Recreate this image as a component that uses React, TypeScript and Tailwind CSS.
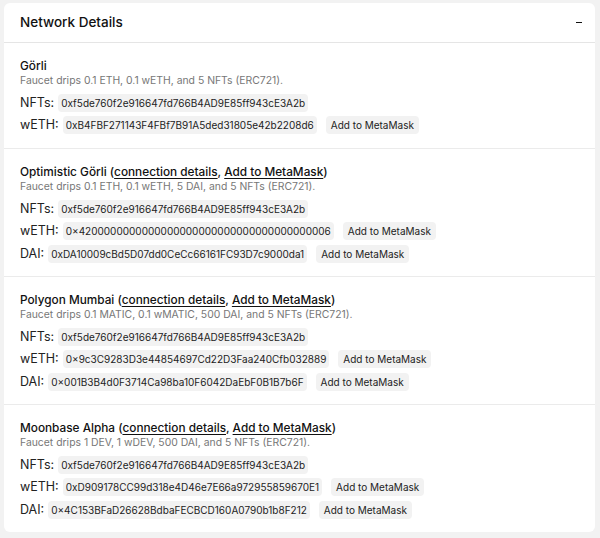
import React from "react";

const NFT = "0xf5de760f2e916647fd766B4AD9E85ff943cE3A2b";

type Row = { label: string; addr: string; add?: boolean; mt: string };
type Net = { name: string; links: boolean; desc: string; rows: Row[]; pb: string };

const nets: Net[] = [
  {
    name: "Görli",
    links: false,
    desc: "Faucet drips 0.1 ETH, 0.1 wETH, and 5 NFTs (ERC721).",
    pb: "pb-[13px]",
    rows: [
      { label: "NFTs:", addr: NFT, mt: "mt-[5px]" },
      { label: "wETH:", addr: "0xB4FBF271143F4FBf7B91A5ded31805e42b2208d6", add: true, mt: "mt-[2px]" },
    ],
  },
  {
    name: "Optimistic Görli",
    links: true,
    desc: "Faucet drips 0.1 ETH, 0.1 wETH, 5 DAI, and 5 NFTs (ERC721).",
    pb: "pb-[12px]",
    rows: [
      { label: "NFTs:", addr: NFT, mt: "mt-[5px]" },
      { label: "wETH:", addr: "0×4200000000000000000000000000000000000006", add: true, mt: "mt-[2px]" },
      { label: "DAI:", addr: "0xDA10009cBd5D07dd0CeCc66161FC93D7c9000da1", add: true, mt: "mt-[3px]" },
    ],
  },
  {
    name: "Polygon Mumbai",
    links: true,
    desc: "Faucet drips 0.1 MATIC, 0.1 wMATIC, 500 DAI, and 5 NFTs (ERC721).",
    pb: "pb-[12px]",
    rows: [
      { label: "NFTs:", addr: NFT, mt: "mt-[5px]" },
      { label: "wETH:", addr: "0×9c3C9283D3e44854697Cd22D3Faa240Cfb032889", add: true, mt: "mt-[2px]" },
      { label: "DAI:", addr: "0×001B3B4d0F3714Ca98ba10F6042DaEbF0B1B7b6F", add: true, mt: "mt-[3px]" },
    ],
  },
  {
    name: "Moonbase Alpha",
    links: true,
    desc: "Faucet drips 1 DEV, 1 wDEV, 500 DAI, and 5 NFTs (ERC721).",
    pb: "pb-[12px]",
    rows: [
      { label: "NFTs:", addr: NFT, mt: "mt-[5px]" },
      { label: "wETH:", addr: "0xD909178CC99d318e4D46e7E66a972955859670E1", add: true, mt: "mt-[2px]" },
      { label: "DAI:", addr: "0×4C153BFaD26628BdbaFECBCD160A0790b1b8F212", add: true, mt: "mt-[3px]" },
    ],
  },
];

export default function App() {
  return (
    <div
      className="min-h-[538px] w-[600px] bg-[#f2f2f2] pl-[4px] pr-[5px] pt-[3px] pb-[3px]"
      style={{ fontFamily: "Inter, 'Noto Sans', sans-serif" }}
    >
      <div className="rounded-md bg-white">
        <div className="flex h-[40px] items-center justify-between border-b border-[#e5e5e5] pl-4 pr-[13px]">
          <div className="text-[13.5px] font-medium text-[#111]">Network Details</div>
          <div className="h-[1.5px] w-[6px] bg-[#111]" />
        </div>
        {nets.map((n, i) => (
          <div
            key={n.name}
            className={`px-4 pt-[15px] ${n.pb} ${i < nets.length - 1 ? "border-b border-[#ebebeb]" : ""}`}
          >
            <div className="text-[11.8px] leading-[16px] font-medium text-[#111]">
              {n.name}
              {n.links && (
                <>
                  {" ("}
                  <span className="underline underline-offset-2">connection details</span>,{" "}
                  <span className="underline underline-offset-2">Add to MetaMask</span>)
                </>
              )}
            </div>
            <div className="text-[10.4px] leading-[14px] text-[#777]">{n.desc}</div>
            {n.rows.map((r) => (
              <div key={r.label} className={`flex h-[20px] items-center ${r.mt}`}>
                <span className="text-[12.5px] text-[#222]">{r.label}</span>
                <span className="ml-[4px] rounded bg-[#f2f2f2] px-[3px] py-[1px] text-[10px] leading-[16px] text-[#222]">
                  {r.addr}
                </span>
                {r.add && (
                  <span className="ml-[9px] rounded bg-[#f2f2f2] px-[5px] py-[1px] text-[10px] leading-[16px] text-[#222]">
                    Add to MetaMask
                  </span>
                )}
              </div>
            ))}
          </div>
        ))}
      </div>
    </div>
  );
}
